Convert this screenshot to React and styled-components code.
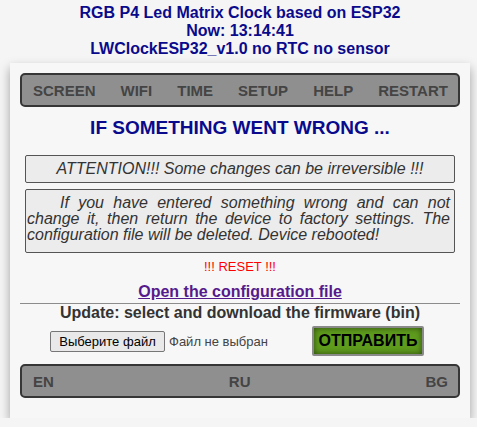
import styled, { createGlobalStyle } from 'styled-components'

const GlobalStyle = createGlobalStyle`
  html, body {
    margin: 0;
    padding: 0;
    background: #f5f5f5;
    font-family: "Liberation Sans", Arial, sans-serif;
  }
`

const Page = styled.div`
  width: 460px;
  margin-left: 10px;
  padding-top: 4px;
`

const Header = styled.div`
  text-align: center;
  font-size: 16px;
  font-weight: 700;
  color: #0a0a8c;
  line-height: 18px;
  margin-bottom: 5px;
`

const Panel = styled.div`
  background: #f7f7f7;
  padding: 10px 10px 20px;
  box-shadow: 0 5px 10px rgba(0, 0, 0, 0.35);
`

const Bar = styled.div`
  display: flex;
  justify-content: space-between;
  align-items: center;
  box-sizing: border-box;
  height: 34px;
  padding: 0 10px 0 11px;
  background: #8f8f8f;
  border: 2px solid #363636;
  border-radius: 5px;
  margin-top: ${(p) => p.$top || 0}px;
`

const BarItem = styled.span`
  font-size: 15px;
  font-weight: 700;
  color: #444;
`

const Title = styled.h2`
  margin: 10px 0 0;
  text-align: center;
  font-size: 19px;
  line-height: 22px;
  color: #0a0a8c;
`

const Notes = styled.div`
  margin: 16px 5px 0;
`

const NoteBox = styled.div`
  background: #ececec;
  border: 1px solid #555;
  border-radius: 2px;
  font-size: 16px;
  line-height: 16px;
  font-style: italic;
  color: #333;
  margin-top: ${(p) => p.$top || 0}px;
  text-align: ${(p) => (p.$justify ? 'justify' : 'center')};
  text-indent: ${(p) => (p.$justify ? '33px' : '0')};
  padding: ${(p) => (p.$justify ? '5px 4px 9px 1px' : '5px 4px')};
`

const Reset = styled.div`
  margin-top: 6px;
  text-align: center;
  color: #ff0000;
  font-size: 13px;
  line-height: 15px;
`

const ConfigLink = styled.a`
  display: block;
  margin-top: 8px;
  text-align: center;
  font-size: 16px;
  font-weight: 700;
  line-height: 19px;
  color: #551a8b;
  text-decoration: underline;
`

const Rule = styled.hr`
  margin: 2px 0 0;
  border: none;
  border-top: 1px solid #8c8c8c;
`

const Update = styled.div`
  text-align: center;
  font-size: 16px;
  font-weight: 700;
  line-height: 18px;
  color: #333;
`

const FileRow = styled.div`
  display: flex;
  justify-content: center;
  align-items: center;
  gap: 8px;
  margin-top: 4px;
  padding-right: 6px;
`

const FilePicker = styled.div`
  width: 254px;
  display: flex;
  align-items: center;
  gap: 4px;
  font-size: 13px;
  color: #444;
`

const FileButton = styled.button`
  box-sizing: border-box;
  width: 115px;
  height: 21px;
  padding: 0;
  font-family: "Liberation Sans", Arial, sans-serif;
  font-size: 13px;
  color: #000;
  background: #e9e9e9;
  border: 1px solid #767676;
  border-radius: 2px;
`

const Submit = styled.button`
  box-sizing: border-box;
  width: 112px;
  height: 30px;
  padding: 0;
  font-family: "Liberation Sans", Arial, sans-serif;
  font-size: 16px;
  font-weight: 700;
  color: #000;
  background: #5f9c1d;
  border: 2px solid #8a8a8a;
  border-radius: 2px;
  box-shadow: inset 0 0 6px rgba(0, 0, 0, 0.55);
`

const menu = ['SCREEN', 'WIFI', 'TIME', 'SETUP', 'HELP', 'RESTART']
const langs = ['EN', 'RU', 'BG']

const App = () => {
  return (
    <Page>
      <GlobalStyle />
      <Header>
        RGB P4 Led Matrix Clock based on ESP32
        <br />
        Now: 13:14:41
        <br />
        LWClockESP32_v1.0 no RTC no sensor
      </Header>
      <Panel>
        <Bar>
          {menu.map((m) => (
            <BarItem key={m}>{m}</BarItem>
          ))}
        </Bar>
        <Title>IF SOMETHING WENT WRONG ...</Title>
        <Notes>
          <NoteBox>ATTENTION!!! Some changes can be irreversible !!!</NoteBox>
          <NoteBox $top={6} $justify>
            If you have entered something wrong and can not change it, then return the device
            to factory settings. The configuration file will be deleted. Device rebooted!
          </NoteBox>
        </Notes>
        <Reset>!!! RESET !!!</Reset>
        <ConfigLink href="#">Open the configuration file</ConfigLink>
        <Rule />
        <Update>Update: select and download the firmware (bin)</Update>
        <FileRow>
          <FilePicker>
            <FileButton type="button">Выберите файл</FileButton>
            <span>Файл не выбран</span>
          </FilePicker>
          <Submit type="button">ОТПРАВИТЬ</Submit>
        </FileRow>
        <Bar $top={8}>
          {langs.map((l) => (
            <BarItem key={l}>{l}</BarItem>
          ))}
        </Bar>
      </Panel>
    </Page>
  )
}

export default App
